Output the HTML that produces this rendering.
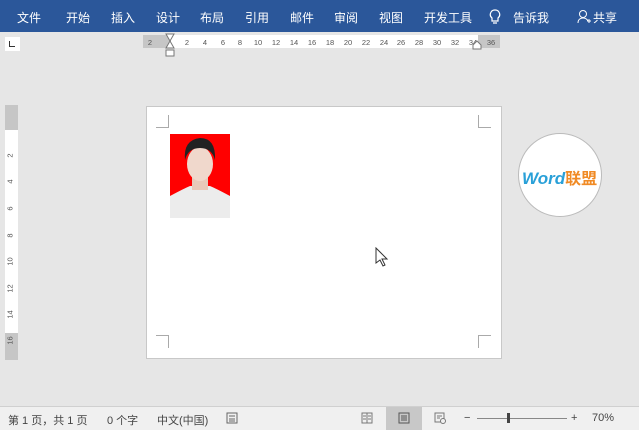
<html><head><style>
body{margin:0;width:639px;height:429px;background:#e6e6e6;position:relative;overflow:hidden;font-family:"Liberation Sans","Noto Sans CJK SC",sans-serif}
.a{position:absolute}
.top{left:0;top:0;width:639px;height:32px;background:#2b579a;color:#fff;font-size:12px}
.top span{position:absolute;top:9px}
.rn{font-size:7.5px;color:#555;top:38px;position:absolute;transform:translateX(-50%)}
.vn{font-size:7.5px;color:#555;position:absolute;left:8px;transform:rotate(-90deg)}
.st{left:0;top:406px;width:639px;height:23px;background:#f0f0f0;border-top:1px solid #d0d0d0;font-size:11px;color:#444}
.st span{position:absolute;top:5px}
</style></head><body>
<div class="a top">
<span style="left:17px">文件</span><span style="left:66px">开始</span><span style="left:111px">插入</span><span style="left:156px">设计</span><span style="left:200px">布局</span><span style="left:245px">引用</span><span style="left:290px">邮件</span><span style="left:334px">审阅</span><span style="left:379px">视图</span><span style="left:424px">开发工具</span>
<svg class="a" style="left:489px;top:9px" width="12" height="16"><path d="M6 1a4.5 4.5 0 0 0-3 8v3h6V9a4.5 4.5 0 0 0-3-8zM4 14h4" stroke="#fff" fill="none" stroke-width="1.2"/></svg>
<span style="left:513px">告诉我</span>
<svg class="a" style="left:577px;top:9px" width="14" height="16"><circle cx="6" cy="5" r="3.5" stroke="#fff" fill="none"/><path d="M1 14c0-4 3-5 5-5s4 1 5 3M10 12h4M12 10v4" stroke="#fff" fill="none"/></svg>
<span style="left:593px">共享</span>
</div>
<div class="a" style="left:5px;top:37px;width:15px;height:14px;background:#fff"></div>
<div class="a" style="left:9px;top:41px;width:5px;height:5px;border-left:1px solid #333;border-bottom:1px solid #333"></div>
<div class="a" style="left:143px;top:35px;width:357px;height:13px;background:#fff"></div>
<div class="a" style="left:143px;top:35px;width:28px;height:13px;background:#c6c6c6"></div>
<div class="a" style="left:478px;top:35px;width:22px;height:13px;background:#c6c6c6"></div>
<span class="rn" style="left:150px">2</span>
<span class="rn" style="left:187px">2</span><span class="rn" style="left:205px">4</span><span class="rn" style="left:223px">6</span><span class="rn" style="left:240px">8</span><span class="rn" style="left:258px">10</span><span class="rn" style="left:276px">12</span><span class="rn" style="left:294px">14</span><span class="rn" style="left:312px">16</span><span class="rn" style="left:330px">18</span><span class="rn" style="left:348px">20</span><span class="rn" style="left:366px">22</span><span class="rn" style="left:384px">24</span><span class="rn" style="left:401px">26</span><span class="rn" style="left:419px">28</span><span class="rn" style="left:437px">30</span><span class="rn" style="left:455px">32</span><span class="rn" style="left:473px">34</span><span class="rn" style="left:491px">36</span>
<svg class="a" style="left:164px;top:33px" width="12" height="24"><path d="M2 1h8L6 8 10 15H2L6 8z" fill="#fff" stroke="#777"/><rect x="2" y="17" width="8" height="6" fill="#fff" stroke="#777"/></svg>
<svg class="a" style="left:472px;top:40px" width="10" height="10"><path d="M1 9V5l4-4 4 4v4z" fill="#fff" stroke="#777"/></svg>
<div class="a" style="left:5px;top:105px;width:13px;height:255px;background:#fff"></div>
<div class="a" style="left:5px;top:105px;width:13px;height:25px;background:#c6c6c6"></div>
<div class="a" style="left:5px;top:333px;width:13px;height:27px;background:#c6c6c6"></div>
<span class="vn" style="top:151px">2</span><span class="vn" style="top:177px">4</span><span class="vn" style="top:204px">6</span><span class="vn" style="top:231px">8</span><span class="vn" style="top:257px;left:6px">10</span><span class="vn" style="top:284px;left:6px">12</span><span class="vn" style="top:310px;left:6px">14</span><span class="vn" style="top:336px;left:6px">16</span>
<div class="a" style="left:146px;top:106px;width:354px;height:251px;background:#fff;border:1px solid #c8c8c8"></div>
<div class="a" style="left:156px;top:115px;width:12px;height:12px;border-right:1px solid #aaa;border-bottom:1px solid #aaa"></div>
<div class="a" style="left:478px;top:115px;width:12px;height:12px;border-left:1px solid #aaa;border-bottom:1px solid #aaa"></div>
<div class="a" style="left:156px;top:335px;width:12px;height:12px;border-right:1px solid #aaa;border-top:1px solid #aaa"></div>
<div class="a" style="left:478px;top:335px;width:12px;height:12px;border-left:1px solid #aaa;border-top:1px solid #aaa"></div>
<svg class="a" style="left:170px;top:134px" width="60" height="84"><rect width="60" height="84" fill="#f00"/><path d="M0 62q15-8 20-10h20q5 2 20 10v22H0z" fill="#ececec"/><rect x="22" y="40" width="16" height="16" fill="#e8c8b8"/><ellipse cx="30" cy="30" rx="13" ry="17" fill="#f0d8cc"/><path d="M15 26q-2-20 15-22 16 0 15 22-3-12-15-12T15 26z" fill="#222"/></svg>
<div class="a" style="left:518px;top:133px;width:82px;height:82px;border-radius:50%;background:#fff;border:1px solid #bbb"></div>
<div class="a" style="left:522px;top:165px;font-size:17px;font-weight:bold;font-style:italic;color:#29a0d8">Word<span style="color:#f08a24;font-style:normal;font-size:16px">联盟</span></div>
<svg class="a" style="left:375px;top:247px" width="14" height="20"><path d="M1 1v15l4-3 3 6 2-1-3-6h5z" fill="#fff" stroke="#333"/></svg>
<div class="a st">
<span style="left:8px">第 1 页，共 1 页</span><span style="left:107px">0 个字</span><span style="left:157px">中文(中国)</span>
<svg class="a" style="left:226px;top:5px" width="12" height="12"><rect x="1" y="1" width="10" height="10" fill="none" stroke="#666"/><path d="M3 4h6M3 7h6M3 9h6" stroke="#666"/></svg>
<svg class="a" style="left:361px;top:5px" width="12" height="12"><path d="M1 1h10v10H1zM6 1v10M2 4h3M7 4h3M2 7h3M7 7h3" fill="none" stroke="#777"/></svg>
<div class="a" style="left:386px;top:0;width:36px;height:23px;background:#c8c8c8"></div>
<svg class="a" style="left:398px;top:5px" width="12" height="12"><path d="M1 1h10v10H1zM3 4h6M3 6h6M3 8h6" fill="none" stroke="#555"/></svg>
<svg class="a" style="left:434px;top:5px" width="12" height="12"><path d="M1 1h9v9H1zM3 4h5M3 6h3" fill="none" stroke="#777"/><circle cx="9" cy="9" r="2.5" fill="#f0f0f0" stroke="#777"/></svg>
<span style="left:464px">−</span>
<div class="a" style="left:477px;top:11px;width:90px;height:1px;background:#888"></div>
<div class="a" style="left:507px;top:6px;width:3px;height:10px;background:#444"></div>
<span style="left:571px">+</span><span style="left:592px">70%</span>
</div>
</body></html>
